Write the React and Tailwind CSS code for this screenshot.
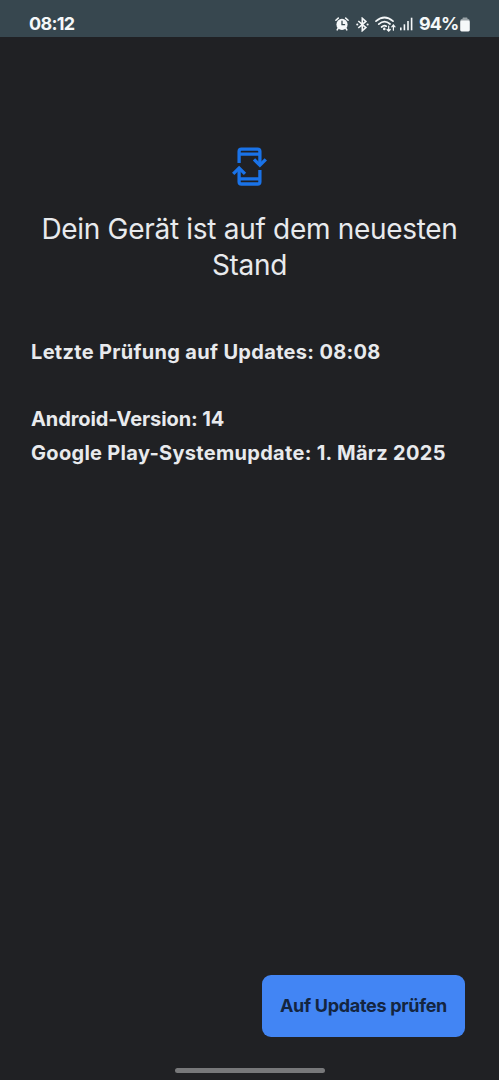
const AlarmIcon = () => (
  <svg width="14" height="14" viewBox="0 0 14 14" fill="none" stroke="currentColor" strokeLinecap="round">
    <circle cx="7" cy="7.4" r="5.6" fill="currentColor" stroke="none" />
    <path d="M3.2 11.2L2.2 12.8M10.8 11.2l1 1.6" strokeWidth="1.6" />
    <path d="M0.9 3.3l2.4-2.2M13.1 3.3L10.7 1.1" strokeWidth="1.5" />
    <path d="M7 4.2v3.5h2.6" stroke="#37474f" strokeWidth="1.3" />
  </svg>
);

const BluetoothIcon = () => (
  <svg width="13" height="15" viewBox="0 0 13 15" fill="none" stroke="currentColor" strokeWidth="1.6">
    <path d="M2.3 4l7.6 6.6L6.3 13.7V1.3l3.6 3.1L2.3 11" />
    <circle cx="1.3" cy="7.5" r="1.1" fill="currentColor" stroke="none" />
    <circle cx="11.6" cy="7.5" r="1.1" fill="currentColor" stroke="none" />
  </svg>
);

const WifiIcon = () => (
  <svg width="21" height="17" viewBox="0 0 21 17" fill="none" stroke="currentColor" strokeLinecap="round">
    <path d="M1 5.2Q9.5-2.2 18 5.2M3.8 8.2Q9.5 3.2 15 8M6.6 11Q9 8.9 11.2 10.2" strokeWidth="1.7" />
    <circle cx="9.3" cy="12.9" r="1.3" fill="currentColor" stroke="none" />
    <path d="M13.7 10v5M12.1 13.5l1.6 1.7 1.6-1.7M18.4 14.2V9.2M16.8 10.8L18.4 9l1.6 1.8" strokeWidth="1.2" />
  </svg>
);

const SignalIcon = () => (
  <svg width="13" height="14" viewBox="0 0 13 14" fill="currentColor">
    <rect x="0" y="10.5" width="1.6" height="2.8" />
    <rect x="3.6" y="7.3" width="1.6" height="6" />
    <rect x="7.2" y="4" width="1.6" height="9.3" />
    <rect x="10.8" y="0.7" width="1.6" height="12.6" />
  </svg>
);

const BatteryIcon = () => (
  <svg width="10" height="15" viewBox="0 0 10 15">
    <path d="M2.5 2V1.2Q2.5.5 3.2.5h3.6q.7 0 .7.7V2h.7Q9.6 2 9.6 3.5v1H.4v-1Q.4 2 1.8 2z" fill="#9aa3a7" />
    <rect x="0.2" y="3.5" width="9.6" height="11" rx="1.4" fill="currentColor" />
  </svg>
);

const UpdateIcon = () => (
  <svg width="36" height="40" viewBox="12 12 36 40" fill="none" stroke="#1a73e8" strokeWidth="3.3">
    <path d="M19.1 28V16.4q0-2.3 2.3-2.3h16.2q2.3 0 2.3 2.3V30" />
    <path d="M19.1 19.2h20.8M19.1 43.8h20.8" />
    <path d="M34 24.3l5.9 5.9 5.9-5.9" />
    <path d="M39.9 35v11.7q0 2.3-2.3 2.3H21.4q-2.3 0-2.3-2.3V33" />
    <path d="M13.2 38.9l5.9-5.9 5.9 5.9" />
  </svg>
);

const StatusBar = () => (
  <header className="flex h-[37px] shrink-0 items-start justify-between bg-[#37474f] pt-3 pr-[29px] pl-[29px] text-[#f5f8f9]">
    <span className="text-[18px] leading-6 font-bold tracking-[-0.7px]">08:12</span>
    <div className="flex h-6 items-center">
      <AlarmIcon />
      <div className="ml-[7px]"><BluetoothIcon /></div>
      <div className="ml-1.5"><WifiIcon /></div>
      <div className="ml-1"><SignalIcon /></div>
      <span className="ml-[6px] w-[40px] text-[18px] leading-6 font-bold tracking-[-0.9px]">94%</span>
      <div className="ml-[1px]"><BatteryIcon /></div>
    </div>
  </header>
);

export default function App() {
  return (
    <div className="flex h-[1080px] w-[499px] flex-col overflow-hidden bg-[#202124] font-['Inter',sans-serif] text-[#e8eaed]">
      <StatusBar />
      <main className="flex flex-1 flex-col">
        <div className="mt-[110px] flex justify-center">
          <UpdateIcon />
        </div>
        <h1 className="mt-6 text-center text-[28px] leading-9 font-normal tracking-[-0.3px] whitespace-nowrap">
          Dein Gerät ist auf dem neuesten
          <br />
          Stand
        </h1>
        <div className="mt-[53px] pl-[31px] text-[20px] leading-[33.5px] font-bold whitespace-nowrap">
          <p className="tracking-[0.32px]">Letzte Prüfung auf Updates: 08:08</p>
          <p className="mt-[33.5px] tracking-[-0.1px]">Android-Version: 14</p>
          <p className="tracking-[0.3px]">Google Play-Systemupdate: 1. März 2025</p>
        </div>
        <div className="mt-auto flex justify-end pr-[34px]">
          <button className="h-[62px] w-[203px] rounded-[9px] bg-[#4285f4] pb-0.5 text-[18px] font-bold tracking-[-0.3px] whitespace-nowrap text-[#142540]">
            Auf Updates prüfen
          </button>
        </div>
      </main>
      <div className="flex h-[43px] shrink-0 justify-center pt-[31px]">
        <div className="h-[5px] w-[150px] rounded-full bg-[#77787a]" />
      </div>
    </div>
  );
}
